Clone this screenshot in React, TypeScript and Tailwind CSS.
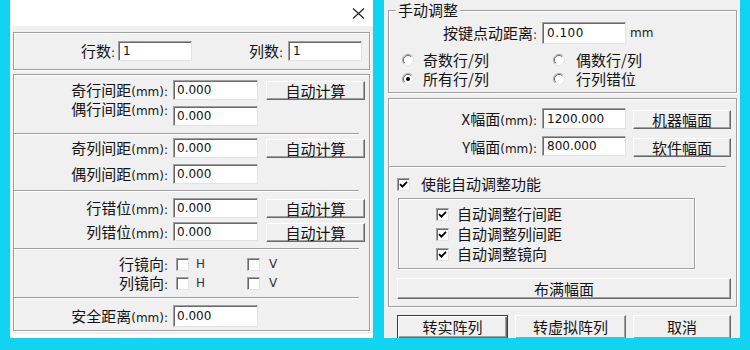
import React from "react";

const CJK = "font-['Noto_Sans_CJK_SC',sans-serif] text-[15px] text-[#141414]";
const LAT = "font-['DejaVu_Sans',sans-serif] text-[12px]";

const GROUP = "border border-[#a0a0a0] shadow-[inset_1px_1px_0_#fff,1px_1px_0_#fff]";
const SEP = "border-t border-t-[#a0a0a0] border-b border-b-white";
const SUNKEN =
  "bg-white border border-t-[#a0a0a0] border-l-[#a0a0a0] border-r-[#e3e3e3] border-b-[#e3e3e3] shadow-[inset_1px_1px_0_#696969]";
const BTN =
  "flex items-center justify-center bg-[#f0f0f0] border border-t-white border-l-white border-r-[#696969] border-b-[#696969] shadow-[inset_-1px_-1px_0_#a0a0a0]";
const BTN_DEFAULT =
  "flex items-center justify-center bg-[#f0f0f0] border border-[#3c3c3c] shadow-[inset_1px_1px_0_#fff,inset_-1px_-1px_0_#696969,inset_-2px_-2px_0_#a0a0a0]";

// label box has a fixed height so mixed CJK/Latin line boxes don't push rows down
function Label({ cjk, lat, className = "" }: { cjk: string; lat?: string; className?: string }) {
  return (
    <div className={`${CJK} flex items-baseline justify-end whitespace-nowrap shrink-0 ${className}`}>
      <span>{cjk}</span>
      <span className={LAT}>{lat ?? ":"}</span>
    </div>
  );
}

function Input({ value, className }: { value: string; className: string }) {
  return (
    <div className={`${SUNKEN} ${LAT} text-[#111] flex items-center pl-[3px] shrink-0 ${className}`}>{value}</div>
  );
}

function Btn({ children, className, primary }: { children: React.ReactNode; className: string; primary?: boolean }) {
  return <div className={`${primary ? BTN_DEFAULT : BTN} ${CJK} leading-[18px] shrink-0 ${className}`}>{children}</div>;
}

function Check({ on }: { on?: boolean }) {
  return (
    <div className={`${SUNKEN} w-[13px] h-[13px] shrink-0 flex items-center justify-center`}>
      {on && (
        <svg width="9" height="9" viewBox="0 0 9 9">
          <path d="M1 4.2 L3.4 6.6 L8 1.8" stroke="#000" strokeWidth="1.8" fill="none" />
        </svg>
      )}
    </div>
  );
}

function Radio({ on }: { on?: boolean }) {
  return (
    <svg width="12" height="12" viewBox="0 0 12 12" className="shrink-0">
      <circle cx="6" cy="6" r="5.5" fill="#fff" />
      <path d="M2.1 9.9 A5.5 5.5 0 0 1 9.9 2.1" stroke="#a0a0a0" fill="none" />
      <path d="M2.8 9.2 A4.5 4.5 0 0 1 9.2 2.8" stroke="#696969" fill="none" />
      <path d="M9.9 2.1 A5.5 5.5 0 0 1 2.1 9.9" stroke="#e3e3e3" fill="none" />
      {on && <circle cx="6" cy="6" r="2" fill="#000" />}
    </svg>
  );
}

function FieldRow({
  cjk,
  btn,
  className = "",
  labelClass = "",
  inputH = "h-[20px]",
}: {
  cjk: string;
  btn?: string;
  className?: string;
  labelClass?: string;
  inputH?: string;
}) {
  return (
    <div className={`flex items-start ${className}`}>
      <Label cjk={cjk} lat="(mm):" className={`w-[154px] h-[20px] leading-[20px] ${labelClass}`} />
      <Input value="0.000" className={`ml-[5px] w-[85px] ${inputH}`} />
      {btn && <Btn className="ml-[8px] mt-[1px] w-[99px] h-[19px]">{btn}</Btn>}
    </div>
  );
}

function LeftPanel() {
  return (
    <div className="w-[363px] h-[338px] bg-white flex flex-col">
      <div className="h-[26px] flex items-center justify-end pr-[8px] shrink-0">
        <svg width="13" height="11" viewBox="0 0 13 11">
          <path d="M1 0.5 L12 10.5 M12 0.5 L1 10.5" stroke="#1a1a1a" strokeWidth="1.1" />
        </svg>
      </div>
      <div className="flex-1 ml-[2px] mb-[4px] bg-[#f0f0f0] flex flex-col pl-[1px]">
        <div className={`${GROUP} mt-[6px] w-[357px] h-[38px] flex items-center shrink-0`}>
          <Label cjk="行数" className="w-[101px] h-[20px] leading-[20px]" />
          <Input value="1" className="ml-[3px] w-[74px] h-[20px] pl-[4px]" />
          <Label cjk="列数" className="w-[91px] h-[20px] leading-[20px]" />
          <Input value="1" className="ml-[5px] w-[74px] h-[20px] pl-[4px]" />
        </div>
        <div className={`${GROUP} mt-[4px] w-[357px] h-[257px] flex flex-col shrink-0`}>
          <div className="h-[58px] pt-[5px] flex flex-col shrink-0">
            <FieldRow cjk="奇行间距" btn="自动计算" />
            <FieldRow cjk="偶行间距" className="mt-[6px]" labelClass="-mt-[7px]" />
          </div>
          <div className={`${SEP} mr-[10px]`} />
          <div className="h-[55px] pt-[3px] flex flex-col shrink-0">
            <FieldRow cjk="奇列间距" btn="自动计算" />
            <FieldRow cjk="偶列间距" className="mt-[6px]" />
          </div>
          <div className={`${SEP} mr-[10px]`} />
          <div className="h-[56px] pt-[6px] flex flex-col shrink-0">
            <FieldRow cjk="行错位" btn="自动计算" />
            <FieldRow cjk="列错位" btn="自动计算" className="mt-[4px]" inputH="h-[19px]" />
          </div>
          <div className={`${SEP} mr-[10px]`} />
          <div className="h-[47px] pt-[5px] flex flex-col gap-[1px] shrink-0">
            {["行镜向", "列镜向"].map((t) => (
              <div key={t} className="h-[18px] flex items-center">
                <Label cjk={t} className="w-[154px] h-[18px] leading-[18px]" />
                <div className="ml-[8px]">
                  <Check />
                </div>
                <span className={`${LAT} ml-[7px] w-[51px] text-[#333] leading-[18px]`}>H</span>
                <Check />
                <span className={`${LAT} ml-[9px] text-[#333] leading-[18px]`}>V</span>
              </div>
            ))}
          </div>
          <div className={`${SEP} mr-[10px]`} />
          <div className="pt-[6px] flex items-center">
            <Label cjk="安全距离" lat="(mm):" className="w-[154px] h-[20px] leading-[20px]" />
            <Input value="0.000" className="ml-[5px] w-[85px] h-[22px]" />
          </div>
        </div>
      </div>
    </div>
  );
}

function RightPanel() {
  return (
    <div className="w-[356px] h-[338px] bg-[#f0f0f0] flex flex-col overflow-hidden">
      <div className={`${GROUP} relative mt-[10px] ml-[4px] w-[349px] h-[83px] flex flex-col shrink-0`}>
        <div className={`${CJK} absolute -top-[11px] left-[7px] px-[2px] bg-[#f0f0f0] leading-[20px]`}>手动调整</div>
        <div className="mt-[11px] h-[22px] flex items-center">
          <Label cjk="按键点动距离" className="w-[148px] h-[20px] leading-[20px]" />
          <Input value="0.100" className="ml-[5px] w-[84px] h-[22px] pl-[4px] tracking-[0.5px]" />
          <span className={`${LAT} text-[11px] ml-[4px] text-[#222]`}>mm</span>
        </div>
        <div className="mt-[6px] flex flex-col pl-[13px]">
          {[
            ["奇数行/列", false, "偶数行/列", false],
            ["所有行/列", true, "行列错位", false],
          ].map(([a, aOn, b, bOn]) => (
            <div key={a as string} className="h-[19px] flex items-center">
              <div className="w-[151px] flex items-center">
                <Radio on={aOn as boolean} />
                <span className={`${CJK} ml-[9px] block h-[18px] leading-[18px]`}>{a as string}</span>
              </div>
              <Radio on={bOn as boolean} />
              <span className={`${CJK} ml-[11px] block h-[18px] leading-[18px]`}>{b as string}</span>
            </div>
          ))}
        </div>
      </div>

      <div className={`${GROUP} mt-[5px] ml-[4px] w-[349px] h-[209px] flex flex-col shrink-0`}>
        <div className="mt-[9px] h-[21px] flex items-start">
          <Label cjk="X幅面" lat="(mm):" className="w-[148px] h-[21px] leading-[21px]" />
          <Input value="1200.000" className="ml-[5px] w-[84px] h-[21px] pl-[4px]" />
          <Btn className="ml-[7px] mt-[2px] w-[98px] h-[19px]">机器幅面</Btn>
        </div>
        <div className="mt-[7px] h-[21px] flex items-start">
          <Label cjk="Y幅面" lat="(mm):" className="w-[148px] h-[21px] leading-[21px]" />
          <Input value="800.000" className="ml-[5px] w-[84px] h-[20px] pl-[4px]" />
          <Btn className="ml-[7px] mt-[2px] w-[98px] h-[19px]">软件幅面</Btn>
        </div>
        <div className={`${SEP} mt-[9px] mr-[10px]`} />
        <div className="mt-[7px] h-[18px] pl-[8px] flex items-center">
          <Check on />
          <span className={`${CJK} ml-[11px] leading-[18px]`}>使能自动调整功能</span>
        </div>
        <div className={`${GROUP} mt-[5px] ml-[9px] w-[297px] h-[71px] pt-[5px] pl-[37px] flex flex-col shrink-0`}>
          {["自动调整行间距", "自动调整列间距", "自动调整镜向"].map((t) => (
            <div key={t} className="h-[20px] flex items-center">
              <Check on />
              <span className={`${CJK} ml-[8px] leading-[20px]`}>{t}</span>
            </div>
          ))}
        </div>
        <Btn className="mt-[9px] ml-[8px] w-[334px] h-[21px]">布满幅面</Btn>
      </div>

      <div className="mt-[8px] ml-[13px] flex gap-[7px]">
        <Btn primary className="w-[111px] h-[24px]">
          转实阵列
        </Btn>
        <Btn className="w-[111px] h-[24px]">转虚拟阵列</Btn>
        <Btn className="w-[98px] h-[24px]">取消</Btn>
      </div>
    </div>
  );
}

export default function App() {
  return (
    <div className="w-[750px] h-[350px] bg-[#10d4f1] flex pl-[10px] overflow-hidden">
      <LeftPanel />
      <div className="w-[11px] shrink-0" />
      <RightPanel />
    </div>
  );
}
